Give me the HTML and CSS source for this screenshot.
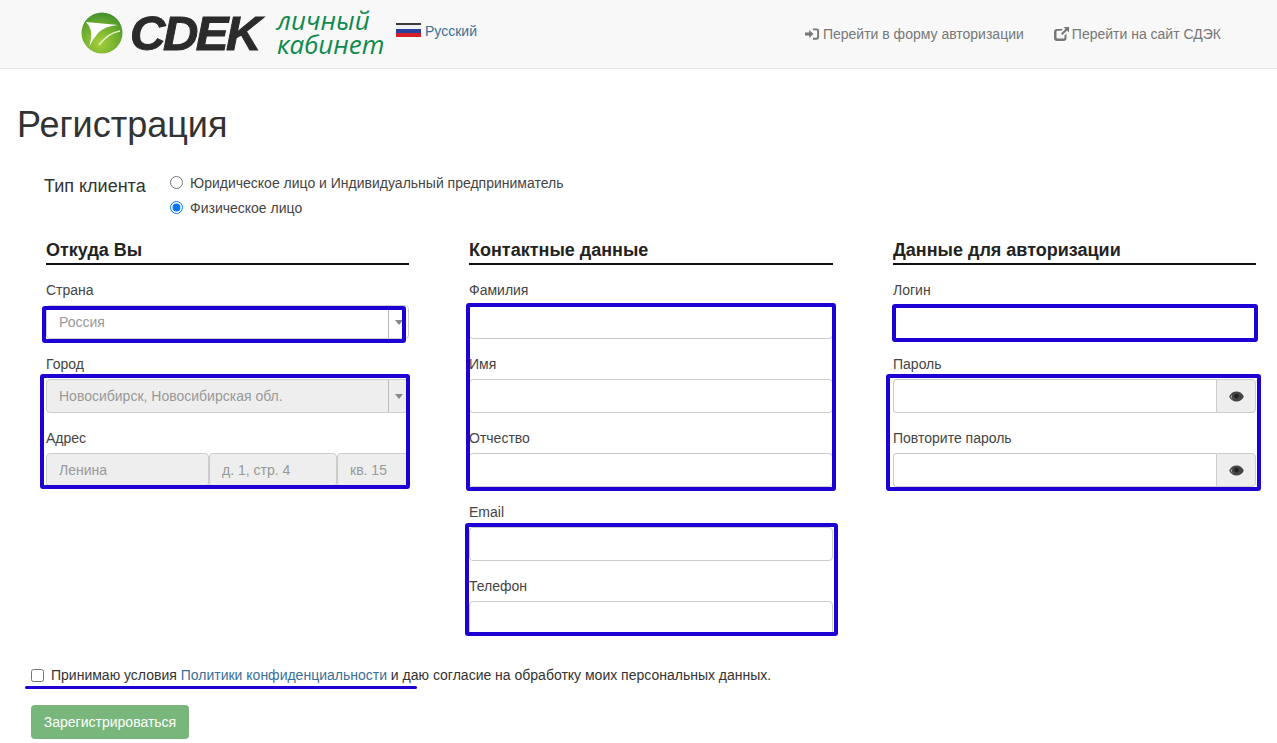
FILE: index.html
```html
<!DOCTYPE html>
<html lang="ru">
<head>
  <meta charset="UTF-8" />
  <meta name="viewport" content="width=device-width, initial-scale=1.0"/>
  <title>Регистрация</title>
  <link rel="stylesheet" href="styles.css">
</head>
<body>
  <header class="topbar">
    <a class="brand" href="#">
      <svg class="brand-ball" viewBox="0 0 42 42" width="42" height="42">
        <defs>
          <radialGradient id="ball" cx="0.45" cy="0.75" r="0.8">
            <stop offset="0" stop-color="#a5cf3a"/>
            <stop offset="0.6" stop-color="#6cac2f"/>
            <stop offset="1" stop-color="#3b8a2c"/>
          </radialGradient>
        </defs>
        <circle cx="21" cy="21" r="20.500" fill="url(#ball)"/>
        <path d="M5 10 L37 13 Q24 14 17 21 Q12 27 8 35 Q11 26 10 19 Q9 14 5 10 Z" fill="#fff"/>
        <path d="M39 19 Q27 21 18 33" stroke="#e6f1c4" stroke-width="1.500" fill="none"/>
      </svg>
      <span class="brand-name">CDEK</span>
      <span class="brand-sub">личный<br>кабинет</span>
    </a>
    <svg class="flag" viewBox="0 0 25 14" width="25" height="14">
      <rect width="25" height="2" y="0" fill="#3a3a3a"/>
      <rect width="25" height="4" y="2" fill="#eef0f4"/>
      <rect width="25" height="4" y="6" fill="#2b3f9c"/>
      <rect width="25" height="4" y="10" fill="#d4202a"/>
    </svg>
    <a class="lang" href="#">Русский</a>
    <nav class="topnav">
      <a href="#">
        <svg viewBox="0 0 16 14" width="15" height="14"><path d="M0 5.500h4.500V2.800L9 7l-4.500 4.200V8.500H0z" fill="#777"/><path d="M8.500 1h4a2.500 2.500 0 0 1 2.500 2.500v7a2.500 2.500 0 0 1-2.500 2.500h-4v-2h3.500a1 1 0 0 0 1-1V4a1 1 0 0 0-1-1H8.500z" fill="#777"/></svg>
        <span>Перейти в форму авторизации</span>
      </a>
      <a href="#">
        <svg viewBox="0 0 15 14" width="15" height="14"><path d="M3 2h6L7.300 3.800H3.500a1 1 0 0 0-1 1v5.700a1 1 0 0 0 1 1h6a1 1 0 0 0 1-1V8.500l2-2V11a3 3 0 0 1-3 3H3a3 3 0 0 1-3-3V5a3 3 0 0 1 3-3z" fill="#777"/><path d="M9.500 0H15v5.500l-2-2L8.500 8 7 6.500 11.500 2z" fill="#777"/></svg>
        <span>Перейти на сайт СДЭК</span>
      </a>
    </nav>
  </header>

  <main class="page">
    <h1>Регистрация</h1>

    <div class="client-type">
      <div class="client-type-label">Тип клиента</div>
      <div class="client-type-options">
        <label><input type="radio" name="type"> Юридическое лицо и Индивидуальный предприниматель</label>
        <label><input type="radio" name="type" checked> Физическое лицо</label>
      </div>
    </div>

    <div class="columns">
      <section>
        <h2>Откуда Вы</h2>
        <div class="field">
          <label>Страна</label>
          <div class="combo">
            <input type="text" value="Россия" disabled>
            <span class="combo-arrow"></span>
          </div>
        </div>
        <div class="field">
          <label>Город</label>
          <div class="combo combo-off">
            <input type="text" value="Новосибирск, Новосибирская обл." disabled>
            <span class="combo-arrow"></span>
          </div>
        </div>
        <div class="field">
          <label>Адрес</label>
          <div class="address">
            <input class="off street" type="text" placeholder="Ленина" disabled>
            <input class="off house" type="text" placeholder="д. 1, стр. 4" disabled>
            <input class="off flat" type="text" placeholder="кв. 15" disabled>
          </div>
        </div>
      </section>

      <section>
        <h2>Контактные данные</h2>
        <div class="field"><label>Фамилия</label><input type="text"></div>
        <div class="field"><label>Имя</label><input type="text"></div>
        <div class="field"><label>Отчество</label><input type="text"></div>
        <div class="field"><label>Email</label><input type="text"></div>
        <div class="field"><label>Телефон</label><input type="text"></div>
      </section>

      <section>
        <h2>Данные для авторизации</h2>
        <div class="field"><label>Логин</label><input type="text"></div>
        <div class="field">
          <label>Пароль</label>
          <div class="pass">
            <input type="password">
            <span class="eye">
              <svg viewBox="0 0 16 12" width="15" height="11"><path d="M8 0.500C4.500 0.500 1.500 2.500 0 6c1.500 3.500 4.500 5.500 8 5.500s6.500-2 8-5.500c-1.500-3.500-4.500-5.500-8-5.500z" fill="#444"/><path d="M3.500 3.800a4.800 4.800 0 0 0 1.500 6.200C3.500 9.200 2.300 7.800 1.600 6c.4-.9 1.100-1.600 1.900-2.200z" fill="#bbb"/><circle cx="8" cy="5.500" r="2.600" fill="#222"/></svg>
            </span>
          </div>
        </div>
        <div class="field">
          <label>Повторите пароль</label>
          <div class="pass">
            <input type="password">
            <span class="eye">
              <svg viewBox="0 0 16 12" width="15" height="11"><path d="M8 0.500C4.500 0.500 1.500 2.500 0 6c1.500 3.500 4.500 5.500 8 5.500s6.500-2 8-5.500c-1.500-3.500-4.500-5.500-8-5.500z" fill="#444"/><path d="M3.500 3.800a4.800 4.800 0 0 0 1.500 6.200C3.500 9.200 2.300 7.800 1.600 6c.4-.9 1.100-1.600 1.900-2.200z" fill="#bbb"/><circle cx="8" cy="5.500" r="2.600" fill="#222"/></svg>
            </span>
          </div>
        </div>
      </section>
    </div>

    <label class="agree">
      <input type="checkbox">
      <span>Принимаю условия <a href="#">Политики конфиденциальности</a> и даю согласие на обработку моих персональных данных.</span>
    </label>

    <button type="button" class="submit">Зарегистрироваться</button>
  </main>

  <!-- blue marker frames drawn over the screenshot -->
  <div class="mark mark-country"></div>
  <div class="mark mark-city"></div>
  <div class="mark mark-names"></div>
  <div class="mark mark-contacts"></div>
  <div class="mark mark-login"></div>
  <div class="mark mark-pass"></div>
  <div class="mark-line"></div>
</body>
</html>
```

FILE: styles.css
```css
* {
  box-sizing: border-box;
}

html, body {
  height: 743px;
  overflow: hidden;
}

body {
  font-family: "Liberation Sans", Arial, sans-serif;
  font-size: 14px;
  line-height: 20px;
  color: #333;
  background: #fff;
  margin: 0;
  position: relative;
}

a {
  color: #3a7099;
  text-decoration: none;
}

/* top bar */
.topbar {
  height: 69px;
  background: #f8f8f8;
  border-bottom: 1px solid #e7e7e7;
  display: flex;
  align-items: flex-start;
  padding: 0 56px 0 81px;
}

.brand {
  display: flex;
  align-items: flex-start;
}

.brand-ball {
  margin-top: 12px;
  flex: none;
}

.brand-name {
  font-size: 49px;
  line-height: 56px;
  margin: 5px 0 0 7px;
  width: 143px;
  font-weight: bold;
  font-style: italic;
  color: #2b2b2b;
  letter-spacing: -2.500px;
  -webkit-text-stroke: 1px #2b2b2b;
}

.brand-sub {
  font-family: "Open Sans", sans-serif;
  font-style: italic;
  font-size: 26px;
  line-height: 24px;
  margin: 8px 0 0 4px;
  width: 119px;
  color: #0f8a4f;
  white-space: nowrap;
}

.flag {
  margin: 23px 4px 0 0;
  flex: none;
}

.lang {
  margin-top: 21px;
}

.topnav {
  margin-left: auto;
  display: flex;
  gap: 30px;
  margin-top: 24px;
}

.topnav a {
  color: #777;
  display: flex;
  align-items: center;
  gap: 3px;
}

/* page */
.page {
  padding: 0 21px 0 31px;
}

h1 {
  font-size: 36px;
  font-weight: normal;
  line-height: 40px;
  margin: 36px 0 0 -14px;
}

.client-type {
  display: flex;
  margin: 25px 0 0 13px;
}

.client-type-label {
  font-size: 18px;
  width: 126px;
  padding-top: 6px;
  line-height: 20px;
}

.client-type-options label {
  display: flex;
  align-items: center;
  height: 25px;
  color: #444;
}

.client-type-options input {
  margin: 0 7px 0 0;
  width: 13px;
  height: 13px;
}

.columns {
  display: grid;
  grid-template-columns: 363px 364px 363px;
  column-gap: 60px;
  margin: 20px 0 0 15px;
  width: 1210px;
}

h2 {
  font-size: 18px;
  font-weight: bold;
  line-height: 20px;
  color: #222;
  margin: 0 0 15px;
  padding-bottom: 3px;
  border-bottom: 2px solid #111;
}

.field {
  margin-bottom: 15px;
}

.field > label {
  display: block;
  height: 20px;
  margin-bottom: 5px;
  color: #444;
}

input[type="text"],
input[type="password"] {
  display: block;
  width: 100%;
  height: 34px;
  padding: 6px 12px;
  font: inherit;
  border: 1px solid #ccc;
  border-radius: 4px;
  background: #fff;
}

input::placeholder {
  color: #999;
}

input:disabled {
  color: #999;
}

.combo {
  display: flex;
  height: 34px;
  border: 1px solid #ccc;
  border-radius: 4px;
  background: #fff;
  overflow: hidden;
}

.combo input[type="text"] {
  flex: 1;
  height: 32px;
  border: 0;
  border-radius: 0;
  background: transparent;
}

.combo-arrow {
  width: 20px;
  flex: none;
  border-left: 1px solid #bbb;
  position: relative;
}

.combo-arrow::after {
  content: "";
  position: absolute;
  left: 6px;
  top: 14px;
  border: 4px solid transparent;
  border-top: 5px solid #888;
  border-bottom: 0;
}

.combo-off {
  background: #eee;
}

.address {
  display: flex;
}

.address input.off {
  background: #eee;
}

.address .street {
  width: 163px;
  flex: none;
}

.address .house {
  width: 128px;
  flex: none;
}

.address .flat {
  width: 72px;
  flex: none;
}

.pass {
  display: flex;
}

.pass input[type="password"] {
  flex: 1;
  border-radius: 4px 0 0 4px;
  border-right: 0;
}

.eye {
  width: 40px;
  flex: none;
  display: flex;
  align-items: center;
  justify-content: center;
  background: #eee;
  border: 1px solid #ccc;
  border-radius: 0 4px 4px 0;
}

.agree {
  display: flex;
  align-items: center;
  margin-top: 15px;
  color: #333;
  height: 20px;
}

.agree input {
  width: 13px;
  height: 13px;
  margin: 0 7px 0 0;
}

.submit {
  display: block;
  margin-top: 20px;
  width: 158px;
  height: 34px;
  border: 0;
  border-radius: 4px;
  background: #79b67c;
  color: #fff;
  font: inherit;
}

/* marker frames, they lie over the form */
.mark {
  position: absolute;
  border: 4px solid #1c00d4;
  border-radius: 3px;
}

.mark-country { left: 42px; top: 306px; width: 364px; height: 37px; }
.mark-city { left: 40px; top: 374px; width: 370px; height: 115px; }
.mark-names { left: 466px; top: 303px; width: 370px; height: 188px; }
.mark-contacts { left: 465px; top: 523px; width: 373px; height: 113px; }
.mark-login { left: 892px; top: 304px; width: 366px; height: 38px; }
.mark-pass { left: 886px; top: 374px; width: 375px; height: 117px; }

.mark-line {
  position: absolute;
  left: 25px;
  top: 686px;
  width: 392px;
  height: 3px;
  background: #1c00d4;
  border-radius: 2px;
}
```
